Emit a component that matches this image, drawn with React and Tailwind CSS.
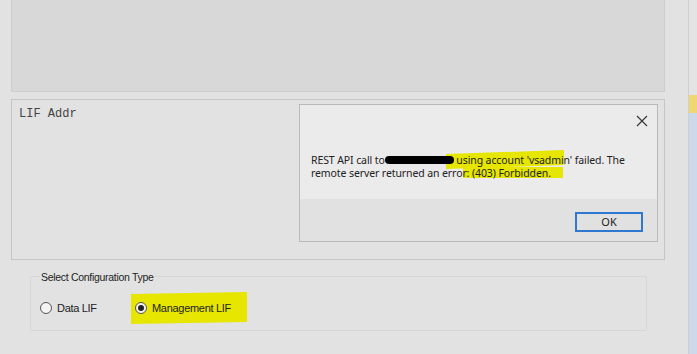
export default function App() {
  return (
    <div className="relative w-[697px] h-[354px] overflow-hidden bg-[#e2e2e2] flex" style={{ fontFamily: '"Noto Sans", sans-serif' }}>
      <div className="w-[689px] border-r border-[#cfcfcf] pl-[11px] pr-[23px] flex flex-col">
        {/* upper panel */}
        <div className="h-[92px] bg-[#d8d8d8] border-l border-r border-b border-[#cdcdcd]" />

        {/* LIF address box */}
        <div className="relative mt-[7px] h-[161px] border border-[#c6c6c6] bg-[#e2e2e2]">
          <div className="pl-[7px] pt-[5px] text-[12px] text-[#444]" style={{ fontFamily: '"Liberation Mono", monospace' }}>
            LIF Addr
          </div>

          {/* message box */}
          <div className="absolute left-[287px] top-[4px] w-[359px] h-[138px] border border-[#b9b9b9] bg-[#ebebeb] flex flex-col">
            <div className="h-[94px] relative">
              <svg className="absolute right-[9px] top-[10px] w-[12px] h-[12px]" viewBox="0 0 12 12" fill="none" stroke="#333" strokeWidth="1.1">
                <path d="M1 1L11 11M11 1L1 11" />
              </svg>
              <div className="absolute left-[11px] top-[49px] text-[10.5px] leading-[13px] tracking-[-0.1px] text-[#222] whitespace-nowrap">
                <div className="relative">
                  <span className="absolute left-[135px] w-[118px] -top-[2px] h-[15px] bg-[#e6e600] -skew-y-2" />
                  <span className="relative">REST API call to</span>
                  <span className="relative inline-block align-middle w-[69px] h-[8px] rounded-full bg-black -mt-[2px]" />
                  <span className="relative"> using account 'vsadmin' failed. The</span>
                </div>
                <div className="relative">
                  <span className="absolute left-[152px] w-[100px] top-0 h-[11px] bg-[#e6e600]" />
                  <span className="relative">remote server returned an error: (403) Forbidden.</span>
                </div>
              </div>
            </div>
            <div className="flex-1 bg-[#e1e1e1] flex items-start justify-end pr-[14px] pt-[13px]">
              <div className="w-[68px] h-[20px] border-2 border-[#2f78cf] bg-[#e1e1e1] flex items-center justify-center text-[11px] text-[#222]">
                OK
              </div>
            </div>
          </div>
        </div>

        {/* configuration group */}
        <div className="relative mt-[16px] ml-[19px] mr-[18px] h-[55px] border border-[#d6d6d6] rounded-[2px]" style={{ fontFamily: '"Liberation Sans", sans-serif' }}>
          <div className="absolute -top-[7px] left-[9px] px-[1px] bg-[#e2e2e2] text-[10.5px] tracking-[-0.3px] text-[#222]">
            Select Configuration Type
          </div>
          <div className="flex items-center pt-[23px] pl-[9px] text-[11px] tracking-[-0.3px] text-[#222]">
            <div className="flex items-center gap-[5px] w-[95px]">
              <span className="w-[12px] h-[12px] rounded-full border border-[#555] bg-[#f4f4f4]" />
              Data LIF
            </div>
            <div className="relative flex items-center gap-[5px]">
              <span className="absolute -left-[4px] -right-[16px] -top-[7px] -bottom-[6px] bg-[#e6e600] -skew-y-1" />
              <span className="relative w-[12px] h-[12px] rounded-full border border-[#555] bg-[#f4f4f4] flex items-center justify-center">
                <span className="w-[6px] h-[6px] rounded-full bg-[#222]" />
              </span>
              <span className="relative">Management LIF</span>
            </div>
          </div>
        </div>
      </div>

      {/* right strip */}
      <div className="flex-1 bg-[#cdd8ea] flex flex-col">
        <div className="h-[95px] bg-[#e4e4e4]" />
        <div className="h-[18px] bg-[#f0d870]" />
      </div>
    </div>
  )
}
